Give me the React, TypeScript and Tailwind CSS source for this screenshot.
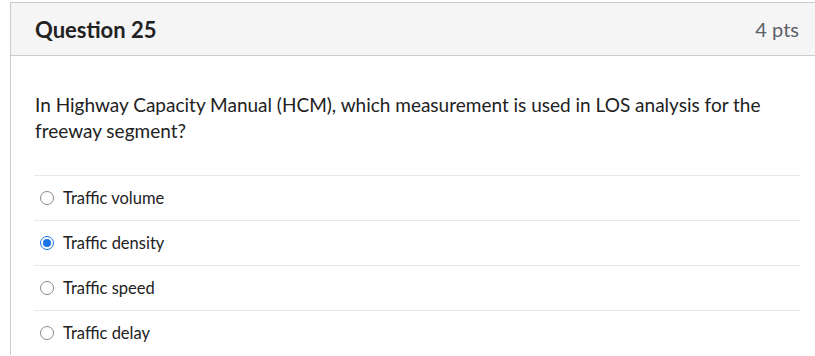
import React from 'react';

const options = [
  { label: 'Traffic volume', checked: false },
  { label: 'Traffic density', checked: true },
  { label: 'Traffic speed', checked: false },
  { label: 'Traffic delay', checked: false },
];

function Radio({ checked }: { checked: boolean }) {
  if (checked) {
    return (
      <span className="flex h-[14px] w-[14px] shrink-0 items-center justify-center rounded-full border border-[#1a73e8] bg-white">
        <span className="h-[8px] w-[8px] rounded-full bg-[#1a73e8]" />
      </span>
    );
  }
  return <span className="h-[14px] w-[14px] shrink-0 rounded-full border border-[#8a8a8a] bg-white" />;
}

export default function App() {
  return (
    <div className="min-h-screen bg-white pt-[2px] pl-[10px]" style={{ fontFamily: 'Lato, "Open Sans", sans-serif' }}>
      <div className="border-l border-t border-[#c7cdd1] text-[#2d3b45]">
        <div className="flex h-[53px] items-center justify-between border-b border-[#c7cdd1] bg-[#f5f5f5] pl-[24px] pr-[16px]">
          <h2 className="text-[22px] font-bold text-[#222]">Question 25</h2>
          <span className="text-[20px] text-[#5b6168]">4 pts</span>
        </div>
        <div className="pl-[24px] pr-[15px] pt-[36px]">
          <p className="whitespace-nowrap text-[19px] leading-[26px] text-[#222]">
            In Highway Capacity Manual (HCM), which measurement is used in LOS analysis for the
            <br />
            freeway segment?
          </p>
          <div className="mt-[31px] ml-[-1px]">
            {options.map((o) => (
              <div key={o.label} className="flex h-[45px] items-center gap-[9px] border-t border-[#e8e8e8] pl-[6px] text-[16.5px] text-[#222]">
                <Radio checked={o.checked} />
                <span>{o.label}</span>
              </div>
            ))}
          </div>
        </div>
      </div>
    </div>
  );
}
